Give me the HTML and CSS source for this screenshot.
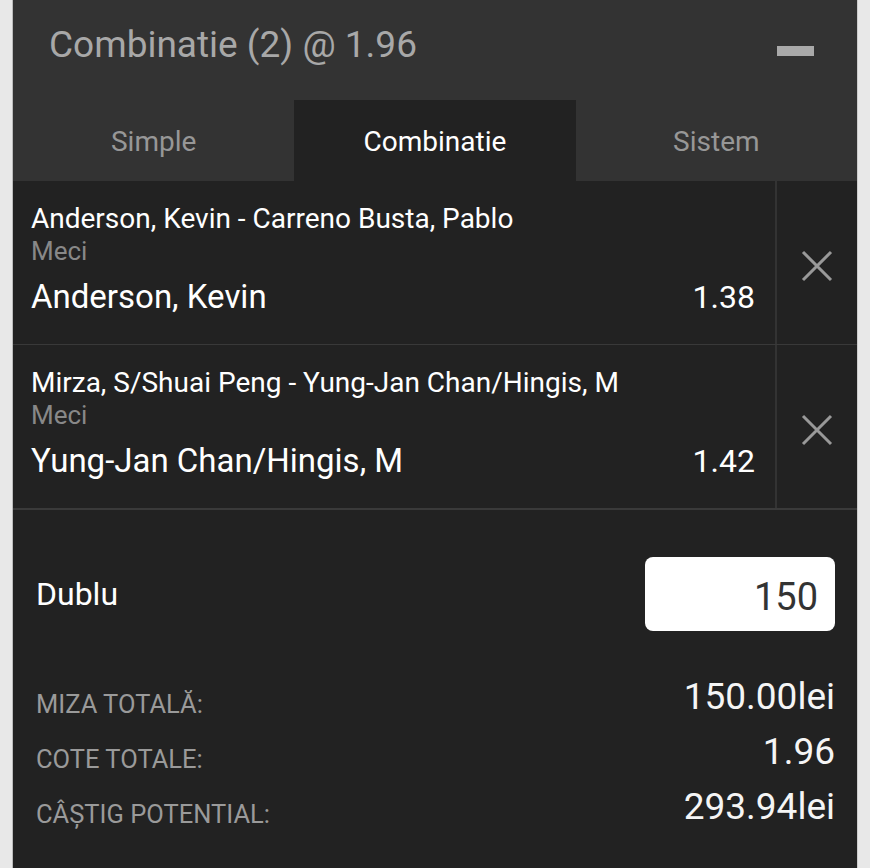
FILE: index.html
```html
<!DOCTYPE html>
<html lang="ro">
<head>
  <meta charset="UTF-8" />
  <meta name="viewport" content="width=device-width, initial-scale=1.0"/>
  <title>Bilet</title>
  <link rel="stylesheet" href="styles.css">
</head>
<body>
  <div class="slip">
    <div class="slip-head">
      <h1>Combinatie (2) @ 1.96</h1>
      <span class="collapse"></span>
    </div>

    <div class="tabs">
      <div class="tab">Simple</div>
      <div class="tab active">Combinatie</div>
      <div class="tab">Sistem</div>
    </div>

    <div class="bets">
      <div class="bet">
        <div class="bet-info">
          <div class="event">Anderson, Kevin - Carreno Busta, Pablo</div>
          <div class="market">Meci</div>
          <div class="pick">
            <span>Anderson, Kevin</span>
            <span class="odds">1.38</span>
          </div>
        </div>
        <div class="remove">
          <svg width="32" height="32" viewBox="0 0 32 32"><path d="M2 2 L30 30 M30 2 L2 30" stroke="#999" stroke-width="3"/></svg>
        </div>
      </div>
      <div class="bet last">
        <div class="bet-info">
          <div class="event">Mirza, S/Shuai Peng - Yung-Jan Chan/Hingis, M</div>
          <div class="market">Meci</div>
          <div class="pick">
            <span>Yung-Jan Chan/Hingis, M</span>
            <span class="odds">1.42</span>
          </div>
        </div>
        <div class="remove">
          <svg width="32" height="32" viewBox="0 0 32 32"><path d="M2 2 L30 30 M30 2 L2 30" stroke="#999" stroke-width="3"/></svg>
        </div>
      </div>
    </div>

    <div class="stake">
      <div class="stake-row">
        <span class="stake-label">Dublu</span>
        <input class="stake-input" type="text" value="150" />
      </div>

      <div class="summary">
        <div class="sum-row">
          <span class="sum-label">MIZA TOTALĂ:</span>
          <span class="sum-value">150.00lei</span>
        </div>
        <div class="sum-row">
          <span class="sum-label">COTE TOTALE:</span>
          <span class="sum-value">1.96</span>
        </div>
        <div class="sum-row">
          <span class="sum-label">CÂŞTIG POTENTIAL:</span>
          <span class="sum-value">293.94lei</span>
        </div>
      </div>
    </div>
  </div>
</body>
</html>
```

FILE: styles.css
```css
body {
  margin: 0;
  background: #e8e8e8;
  font-family: 'Roboto', 'Noto Sans', sans-serif;
}
.slip {
  margin: 0 12px;
  min-height: 868px;
  background: #222;
  border-left: 1px solid #bbb;
  border-right: 1px solid #ccc;
  box-sizing: border-box;
}

.slip-head {
  height: 100px;
  box-sizing: border-box;
  padding: 25px 43px 0 36px;
  display: flex;
  justify-content: space-between;
  align-items: flex-start;
  background: #333;
}
.slip-head h1 {
  margin: 0;
  font-size: 37px;
  line-height: 40px;
  font-weight: 400;
  color: #a8a8a8;
}
.collapse {
  width: 37px;
  height: 10px;
  margin-top: 21px;
  background: #a9a9a9;
}

.tabs {
  display: grid;
  grid-template-columns: repeat(3, 1fr);
  height: 81px;
  background: #333;
}
.tab {
  display: flex;
  align-items: center;
  justify-content: center;
  padding-top: 2px;
  font-size: 28px;
  color: #979797;
}
.tab.active { background: #222; color: #fff; }

.bet {
  display: flex;
  border-bottom: 1px solid #393939;
}
.bet.last { border-bottom: 2px solid #3a3a3a; }
.bet-info {
  flex: 1;
  padding: 22px 20px 28px 18px;
  color: #fff;
}
.event { font-size: 28px; line-height: 32px; }
.market { font-size: 26px; line-height: 30px; margin-top: 1px; color: #888; }
.pick {
  display: flex;
  justify-content: space-between;
  margin-top: 12px;
  font-size: 33px;
  line-height: 38px;
}
.odds { font-size: 32px; }
.remove {
  width: 82px;
  border-left: 2px solid #333;
  display: flex;
  align-items: center;
  justify-content: center;
  padding-top: 6px;
  box-sizing: border-box;
}

.stake { padding: 47px 22px 0 22px; }
.stake-row {
  display: flex;
  justify-content: space-between;
  align-items: center;
}
.stake-label { font-size: 32px; color: #fff; margin-left: 1px; }
.stake-input {
  width: 190px;
  height: 74px;
  box-sizing: border-box;
  border: none;
  border-radius: 8px;
  background: #fff;
  padding: 6px 17px 0 0;
  text-align: right;
  font-family: 'Roboto', sans-serif;
  font-size: 38px;
  color: #333;
}

.summary {
  margin-top: 45px;
  display: flex;
  flex-direction: column;
  gap: 13px;
}
.sum-row {
  display: flex;
  justify-content: space-between;
  align-items: flex-end;
  height: 42px;
}
.sum-label { font-size: 25.5px; line-height: 28px; color: #9a9a9a; margin-left: 1px; }
.sum-value { font-size: 37px; line-height: 42px; color: #f5f5f5; }
```
